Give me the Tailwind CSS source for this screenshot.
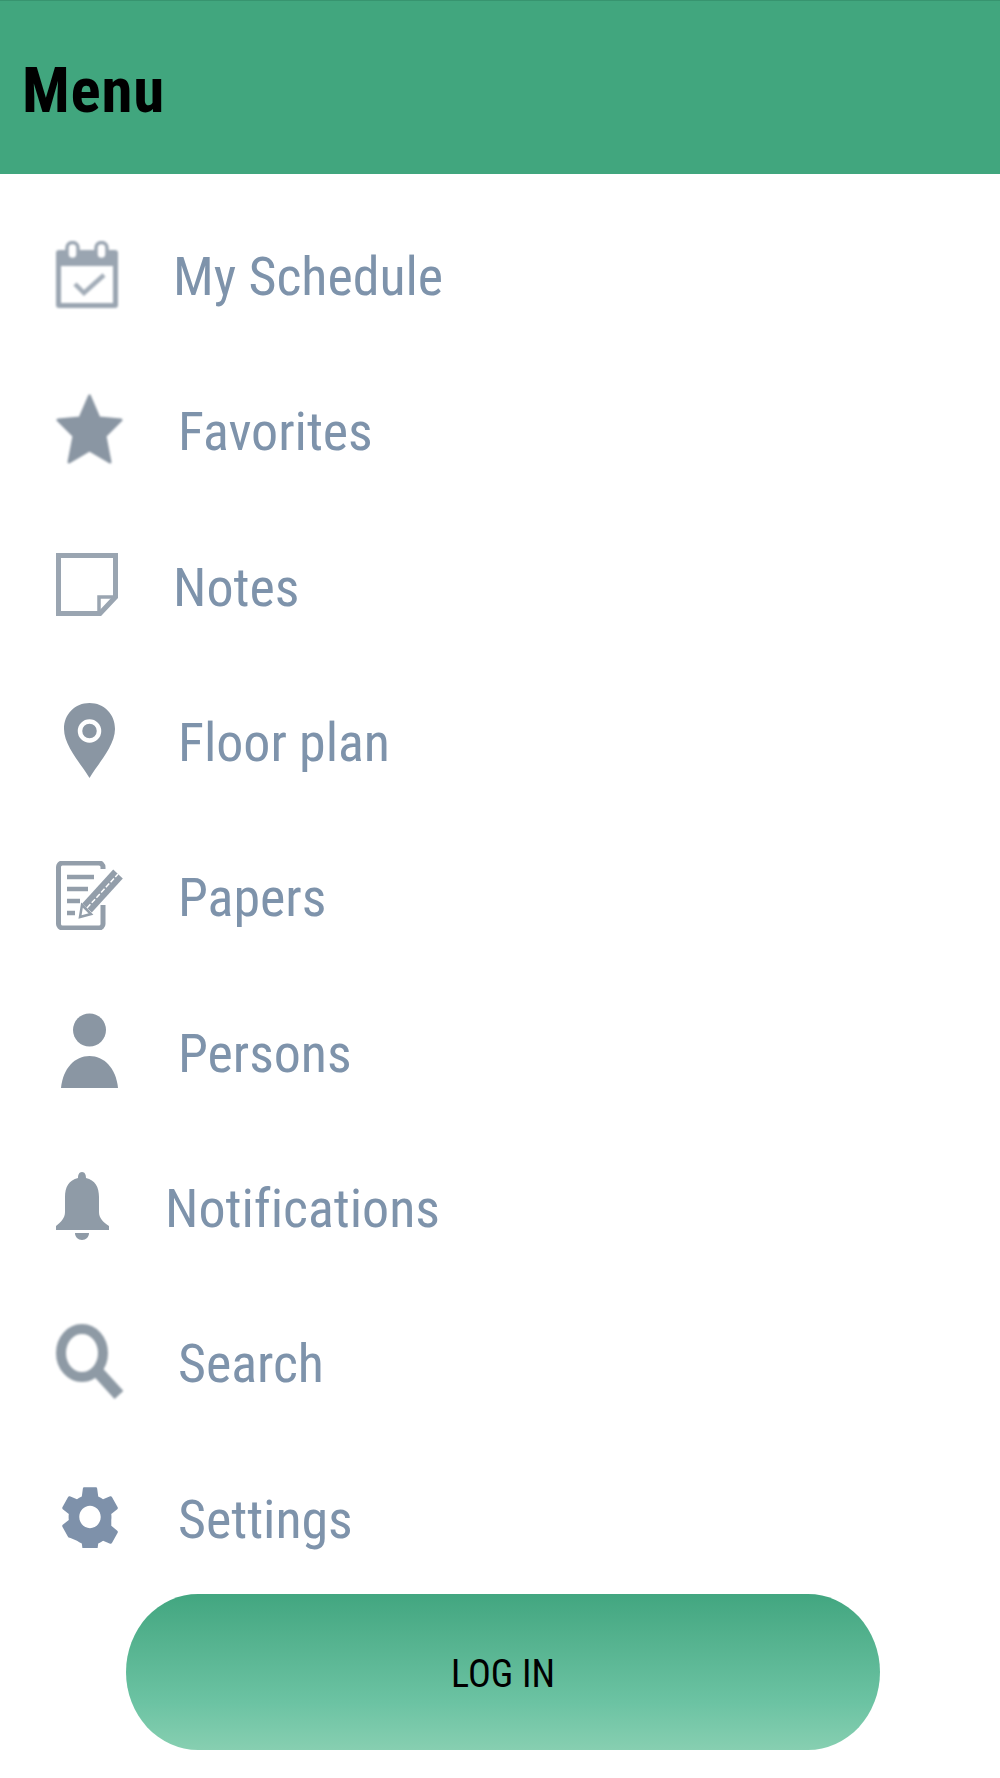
<!DOCTYPE html>
<html lang="en">
<head>
  <meta charset="UTF-8" />
  <title>Menu</title>
  <script src="https://cdn.jsdelivr.net/npm/@tailwindcss/browser@4"></script>
</head>
<body class="bg-white font-['Roboto',sans-serif]">
  <div class="w-[1000px] h-[1778px] overflow-hidden">
    <header class="h-[174px] bg-[#41a67e] border-t border-[#37946f] flex items-center pl-[22px]">
      <h1 class="text-[63px] font-bold text-black [font-stretch:75%] tracking-[0.8px] mt-[8px]">Menu</h1>
    </header>

    <nav class="pt-[25px] pl-[56px] text-[#7e93ab] text-[54px] [font-stretch:75%] tracking-[-0.05px]">
      <!-- My Schedule -->
      <a class="h-[155.3px] flex items-center">
        <span class="w-[117px] shrink-0 mb-[4px]">
          <svg class="w-[62px] h-[68px] blur-[0.8px]" viewBox="0 0 62 68">
            <path fill="#9aa5b1" fill-rule="evenodd" d="M3 9H59a3 3 0 0 1 3 3V64a3 3 0 0 1-3 3H3a3 3 0 0 1-3-3V12a3 3 0 0 1 3-3ZM5 25V62H57V25Z" />
            <rect x="11" y="1.5" width="11" height="17" rx="5.5" fill="#fff" stroke="#9aa5b1" stroke-width="3.5" />
            <rect x="40" y="1.5" width="11" height="17" rx="5.5" fill="#fff" stroke="#9aa5b1" stroke-width="3.5" />
            <path d="M19 43l9 9 20-18" fill="none" stroke="#a3adb8" stroke-width="4.5" />
          </svg>
        </span>
        My Schedule
      </a>
      <!-- Favorites -->
      <a class="h-[155.3px] flex items-center">
        <span class="w-[122px] shrink-0 mb-[5px]">
          <svg class="w-[67px] h-[72px] blur-[0.8px]" viewBox="0 0 67 72">
            <path fill="#8a96a3" stroke="#8a96a3" stroke-width="3" stroke-linejoin="round" d="M33.5 3L43 25 65 27 49 43 54 69 33.5 57 13 69 18 43 2 27 24 25Z" />
          </svg>
        </span>
        Favorites
      </a>
      <!-- Notes -->
      <a class="h-[155.3px] flex items-center">
        <span class="w-[117px] shrink-0 mb-[5px]">
          <svg class="w-[62px] h-[63px] blur-[0.7px]" viewBox="0 0 62 63" fill="none" stroke="#9aa5b1" stroke-width="5">
            <path d="M2.5 2.5H59.5V44L44 60.5H2.5Z" />
            <path d="M43 60V44H60" stroke-width="3.5" />
          </svg>
        </span>
        Notes
      </a>
      <!-- Floor plan -->
      <a class="h-[155.3px] flex items-center">
        <span class="w-[122px] shrink-0 mb-[5px] pl-[8px]">
          <svg class="w-[51px] h-[75px] blur-[0.7px]" viewBox="0 0 51 75">
            <path fill="#8a96a3" d="M25.5 0C11 0 0 11 0 26 0 43 18 62 25.5 75 33 62 51 43 51 26 51 11 40 0 25.5 0Z" />
            <circle cx="25.5" cy="28" r="9.5" fill="none" stroke="#fff" stroke-width="4.5" />
          </svg>
        </span>
        Floor plan
      </a>
      <!-- Papers -->
      <a class="h-[155.3px] flex items-center">
        <span class="w-[122px] shrink-0 mb-[5px]">
          <svg class="w-[67px] h-[69px] blur-[0.7px]" viewBox="0 0 67 69" fill="none" stroke="#939eaa">
            <path stroke-width="5" d="M47 8V6a4 4 0 0 0-4-4H6A4 4 0 0 0 2.5 6V63a4 4 0 0 0 4 4H43a4 4 0 0 0 4-4V44" />
            <path stroke-width="4.5" d="M11 16H38M11 28H32M11 40H24M11 52H19" />
            <path stroke-width="13" d="M31 47L62 13" />
            <path stroke="#fff" stroke-width="1.5" stroke-dasharray="5 2" d="M31 47L62 13" />
            <path fill="#fff" stroke-width="2.5" d="M26 44L35 53 24 56Z" />
          </svg>
        </span>
        Papers
      </a>
      <!-- Persons -->
      <a class="h-[155.3px] flex items-center">
        <span class="w-[122px] shrink-0 mb-[5px] pl-[5px]">
          <svg class="w-[57px] h-[75px] blur-[0.6px]" viewBox="0 0 57 75" fill="#8a96a3">
            <circle cx="28.5" cy="17" r="16.5" />
            <path d="M0 75C2 55 14 43 28.5 43 43 43 55 55 57 75Z" />
          </svg>
        </span>
        Persons
      </a>
      <!-- Notifications -->
      <a class="h-[155.3px] flex items-center">
        <span class="w-[109px] shrink-0 mb-[5px]">
          <svg class="w-[53px] h-[68px] blur-[0.7px]" viewBox="0 0 53 68" fill="#8f9ba7">
            <path d="M26 0c3 0 4 3 4 6 9 2 13 9 13 19V40c0 6 4 10 10 14v4H0v-4c5-4 9-8 9-14V25C9 15 13 8 22 6c0-3 1-6 4-6Z" />
            <path d="M19 61H33c0 4-3 7-7 7s-7-3-7-7Z" />
          </svg>
        </span>
        Notifications
      </a>
      <!-- Search -->
      <a class="h-[155.3px] flex items-center">
        <span class="w-[122px] shrink-0 mb-[5px]">
          <svg class="w-[67px] h-[75px] blur-[0.9px]" viewBox="0 0 67 75" fill="none" stroke="#8e9aa5">
            <ellipse cx="26" cy="29" rx="21" ry="24" stroke-width="10" />
            <path stroke-width="12" d="M42 48L63 71" />
          </svg>
        </span>
        Search
      </a>
      <!-- Settings -->
      <a class="h-[155.3px] flex items-center">
        <span class="w-[122px] shrink-0 mb-[5px] pl-[6px]">
          <svg class="w-[56px] h-[62px]" viewBox="2.6 2 18.8 20" preserveAspectRatio="none">
            <path fill="#7e91aa" d="M19.14 12.94c.04-.3.06-.61.06-.94 0-.32-.02-.64-.07-.94l2.03-1.58c.18-.14.23-.41.12-.61l-1.92-3.32c-.12-.22-.37-.29-.59-.22l-2.39.96c-.5-.38-1.03-.7-1.62-.94l-.36-2.54c-.04-.24-.24-.41-.48-.41h-3.84c-.24 0-.43.17-.47.41l-.36 2.54c-.59.24-1.13.57-1.62.94l-2.39-.96c-.22-.08-.47 0-.59.22L2.74 8.87c-.12.21-.08.47.12.61l2.03 1.58c-.05.3-.07.62-.07.94s.02.64.06.94l-2.03 1.58c-.18.14-.23.41-.12.61l1.92 3.32c.12.22.37.29.59.22l2.39.96c.5.38 1.03.7 1.62.94l.36 2.54c.05.24.24.41.48.41h3.84c.24 0 .44-.17.47-.41l.36-2.54c.59-.24 1.13-.56 1.62-.94l2.39.96c.22.08.47 0 .59-.22l1.92-3.32c.12-.22.07-.47-.12-.61l-2.01-1.58zM12 15.6c-1.98 0-3.6-1.62-3.6-3.6s1.62-3.6 3.6-3.6 3.6 1.62 3.6 3.6-1.62 3.6-3.6 3.6z" />
          </svg>
        </span>
        Settings
      </a>
    </nav>

    <button class="block -mt-[3px] ml-[126px] w-[754px] h-[156px] pt-[6px] rounded-[72px/78px] bg-gradient-to-b from-[#42a680] via-[#6cc3a3] via-70% to-[#87cfb1] text-black text-[38px] [font-stretch:75%]">LOG IN</button>
  </div>
</body>
</html>
